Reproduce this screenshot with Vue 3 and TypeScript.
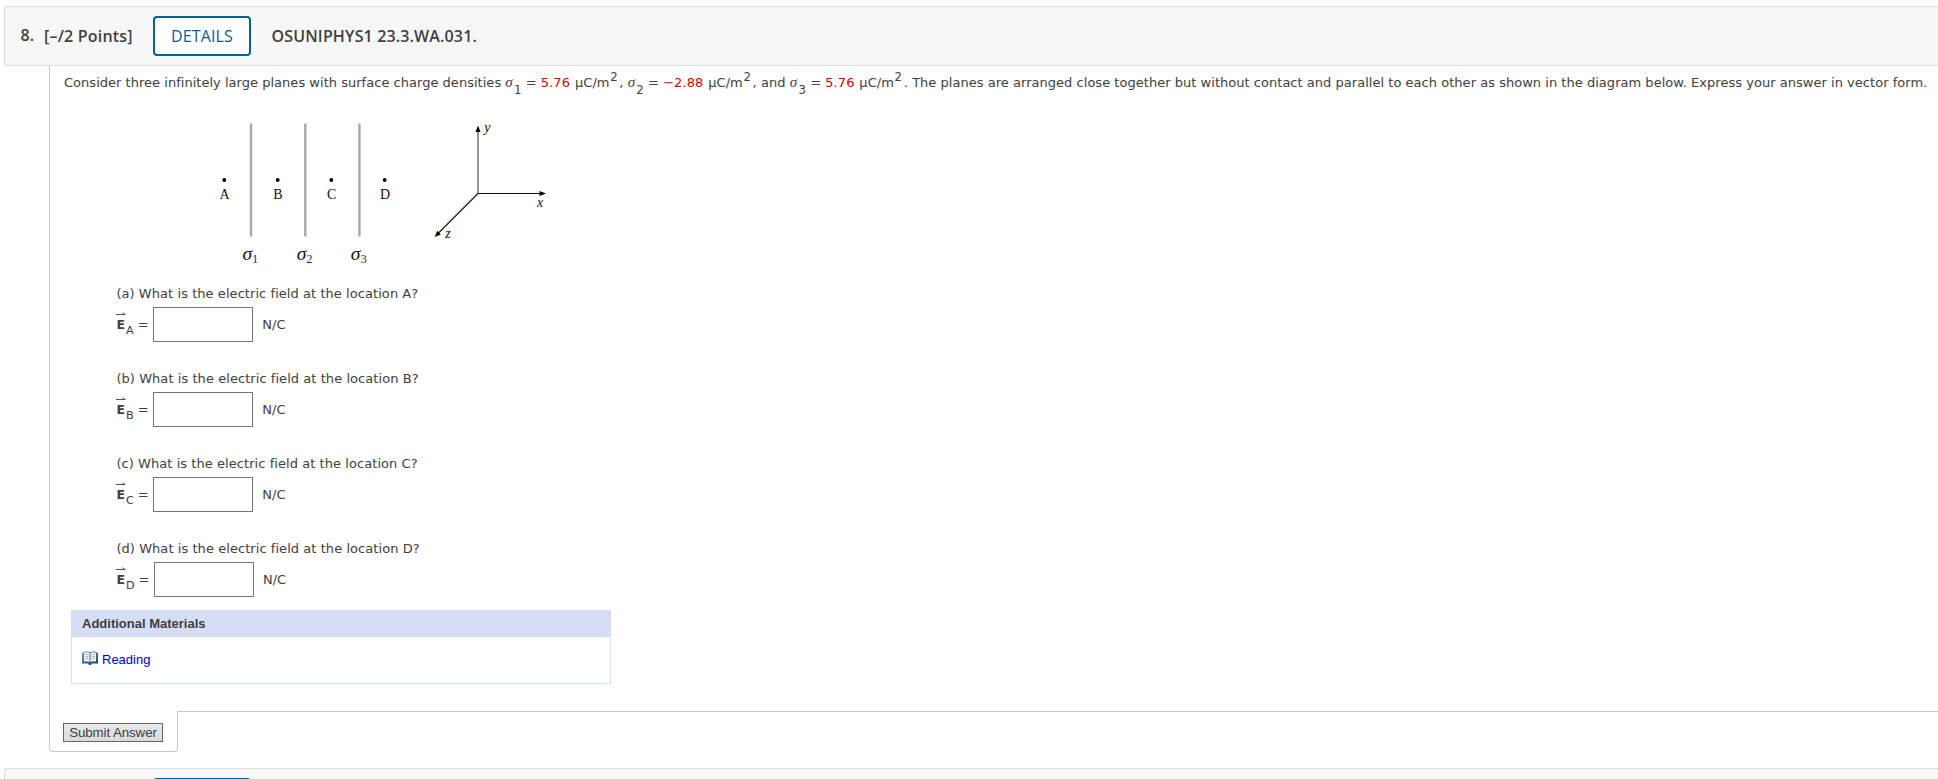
<template>
  <div class="page">
    <header class="question-header">
      <span class="number">8.</span>
      <span class="points">[–/2 Points]</span>
      <button class="details" type="button">DETAILS</button>
      <span class="code">OSUNIPHYS1 23.3.WA.031.</span>
    </header>

    <main class="question-body">
      <p class="intro">
        <span class="lead">Consider three infinitely large planes with surface charge densities </span>
        <template v-for="(plane, index) in planes" :key="plane.id">
          <span class="density"><i class="sigma">σ</i><sub>{{ plane.id }}</sub> = <span class="value">{{ plane.density }}</span> µC/m<sup>2</sup>{{ plane.after }}</span>
          <template v-if="index < planes.length - 1">{{ ' ' }}</template>
        </template>
        <span class="rest"> The planes are arranged close together but without contact and parallel to each other as shown in the diagram below. Express your answer in vector form.</span>
      </p>

      <svg class="diagram" width="380" height="160" viewBox="0 0 380 160">
        <g v-for="plane in planes" :key="plane.id">
          <line :x1="plane.x" y1="13.5" :x2="plane.x" y2="126.5" stroke="#a7a7aa" stroke-width="2.4" />
          <text :x="plane.x - 8.6" y="149.5" class="sigma-label">σ</text>
          <text :x="plane.x + 1" y="153" class="sigma-index">{{ plane.id }}</text>
        </g>
        <g v-for="point in points" :key="point.name">
          <circle :cx="point.x" cy="70" r="1.9" />
          <text :x="point.x + 0.3" y="89" text-anchor="middle" class="point-label">{{ point.name }}</text>
        </g>
        <line x1="278" y1="83.5" x2="278" y2="20" stroke="#707070" stroke-width="1.5" />
        <path d="M278 83.5H341M278 83.5L238 123.5" fill="none" stroke="#111" stroke-width="1.1" />
        <path d="M278 15.5L280.5 22H275.5ZM346 83.5L339.5 81V86ZM234.7 127L237.2 120.8L240.8 124.4Z" />
        <text x="284.3" y="22" class="axis-label">y</text>
        <text x="337" y="97.3" class="axis-label">x</text>
        <text x="245.3" y="128.3" class="axis-label">z</text>
      </svg>

      <section v-for="part in parts" :key="part.letter" class="part">
        <div class="prompt">({{ part.letter }}) What is the electric field at the location {{ part.location }}?</div>
        <div class="answer">
          <span class="vector">
            <svg class="arrow" width="10" height="5" viewBox="0 0 10 5">
              <path d="M0 2.5H9.5M6.5 0.7L9 2.5" fill="none" stroke="#555" />
            </svg>
            <b>E</b>
          </span>
          <span class="location">{{ part.location }}</span>
          <span class="equals">=</span>
          <input v-model="part.value" type="text" />
          <span class="unit">N/C</span>
        </div>
      </section>

      <section class="materials">
        <h3>Additional Materials</h3>
        <a class="reading">
          <svg width="16" height="14" viewBox="0 0 16 14">
            <defs>
              <linearGradient id="cover" x1="0" y1="0" x2="1" y2="1">
                <stop offset="0" stop-color="#5c9bc8" />
                <stop offset="1" stop-color="#153f6d" />
              </linearGradient>
            </defs>
            <path d="M0 1.5H1.5L3 .5H6L8 1.2L10 .5H13L14.5 1.5H16V12.5H10L9 14H7L6 12.5H0Z" fill="url(#cover)" />
            <path d="M2 2Q5 .5 7.7 2V11Q5 9.7 2 10.5ZM8.3 2Q11 .5 14 2V10.5Q11 9.7 8.3 11Z" fill="#f5f3f0" />
            <path d="M3.3 3.5H6.3M3.3 5.5H6.3M3.3 7.5H6.3M9.7 3.5H12.7M9.7 5.5H12.7M9.7 7.5H12.7" stroke="#aaa" stroke-width=".9" />
            <path d="M8 2V11" stroke="#777" stroke-width=".7" />
          </svg>
          <span>Reading</span>
        </a>
      </section>
    </main>

    <div class="footer">
      <div class="submit-tab">
        <button class="submit" type="button">Submit Answer</button>
      </div>
      <div class="footer-line"></div>
    </div>

    <header class="question-header next">
      <button class="details" type="button"></button>
    </header>
  </div>
</template>

<script setup lang="ts">
import { ref } from 'vue'

interface Plane {
  id: number
  density: string
  after: string
  x: number
}

interface Part {
  letter: string
  location: string
  value: string
}

const planes: Plane[] = [
  { id: 1, density: '5.76', after: ',', x: 51 },
  { id: 2, density: '−2.88', after: ', and', x: 105.3 },
  { id: 3, density: '5.76', after: '.', x: 159.4 },
]

const points = [
  { name: 'A', x: 24.3 },
  { name: 'B', x: 77.7 },
  { name: 'C', x: 131.3 },
  { name: 'D', x: 184.7 },
]

const parts = ref<Part[]>(
  ['A', 'B', 'C', 'D'].map((location) => ({
    letter: location.toLowerCase(),
    location,
    value: '',
  })),
)
</script>

<style>
body {
  margin: 0;
  background: #fff;
}
</style>

<style scoped>
.page {
  box-sizing: border-box;
  height: 779px;
  padding-top: 6px;
  overflow: hidden;
  color: #404040;
  font: 13px/18px Verdana, "DejaVu Sans", sans-serif;
}

.question-header {
  display: flex;
  box-sizing: border-box;
  height: 60px;
  margin-left: 4px;
  padding: 9px 0 0 15.5px;
  border: 1px solid #ddd;
  border-right: 0;
  border-radius: 3px 0 0 3px;
  background: #f7f7f7;
  font: 600 16px/40px "Open Sans", sans-serif;
  white-space: nowrap;
}

.number {
  width: 23.5px;
  line-height: 38px;
}

.points {
  width: 109px;
  letter-spacing: 0.2px;
}

.details {
  box-sizing: border-box;
  width: 98px;
  height: 40px;
  padding: 0;
  border: 2px solid #00629b;
  border-radius: 4px;
  background: #fff;
  color: #0b5c9c;
  font: 400 16px/36px "Open Sans", sans-serif;
  letter-spacing: 0.15px;
}

.code {
  margin-left: 20.5px;
  letter-spacing: 0.14px;
}

.question-body {
  box-sizing: border-box;
  height: 645px;
  margin-left: 49px;
  border-left: 1px solid #c8c8c8;
}

.intro {
  height: 44px;
  margin: 0;
  padding: 7px 0 0 14px;
  box-sizing: border-box;
  white-space: nowrap;
}

.lead {
  letter-spacing: 0.025px;
}

.density {
  letter-spacing: 0.06px;
}

.rest {
  letter-spacing: 0.03px;
}

.sigma {
  margin-right: 1.2px;
  font-family: "Liberation Serif", serif;
  font-size: 15px;
}

sub,
sup {
  position: relative;
  font-size: 11.7px;
  line-height: 0;
  vertical-align: baseline;
}

sub {
  top: 7px;
}

sup {
  top: -6px;
  margin: 0 1.7px 0 0.6px;
}

.value {
  margin-right: 0.7px;
  color: #d90000;
}

.diagram {
  display: block;
  margin-left: 150px;
}

.sigma-label,
.sigma-index,
.point-label,
.axis-label {
  font-family: "Liberation Serif", serif;
  fill: #111;
}

.sigma-label {
  font-size: 19.5px;
  font-style: italic;
}

.sigma-index {
  font-size: 12.5px;
  fill: #333;
}

.point-label {
  font-size: 14px;
}

.axis-label {
  font-size: 14px;
  font-style: italic;
}

.part {
  height: 85px;
  margin-left: 66px;
}

.diagram + .part {
  margin-top: 14px;
}

.prompt {
  box-sizing: border-box;
  height: 23px;
  padding: 1px 0 0 0.4px;
  letter-spacing: 0.06px;
  white-space: nowrap;
}

.answer {
  display: flex;
  height: 35px;
  line-height: 35px;
}

.vector {
  position: relative;
  width: 10px;
}

.arrow {
  position: absolute;
  top: 5px;
  left: 0;
}

.vector b {
  margin-left: 0.4px;
  font-size: 12.5px;
}

.location {
  min-width: 8px;
  padding-top: 6px;
  font-size: 11.2px;
}

.equals {
  margin-left: 3.8px;
}

.answer input {
  box-sizing: border-box;
  flex: none;
  width: 100px;
  height: 35px;
  margin: 0 9.3px 0 4.3px;
  border: 1px solid #767676;
  background: #fff;
}

.materials {
  box-sizing: border-box;
  width: 540px;
  height: 74px;
  margin: -14px 0 0 21px;
  border: 1px solid #d6ddf7;
  font: 13px/16px Arial, "Liberation Sans", sans-serif;
}

.materials h3 {
  height: 26px;
  margin: 0;
  padding-left: 10px;
  background: #d6ddf7;
  font-size: 13px;
  line-height: 26px;
}

.reading {
  display: flex;
  gap: 4px;
  padding: 14px 0 0 10px;
  color: #0000c4;
}

.reading span {
  line-height: 18px;
}

.footer {
  display: flex;
  height: 57px;
  margin-left: 49px;
}

.submit-tab {
  box-sizing: border-box;
  width: 129px;
  height: 41px;
  padding: 12px 0 0 13px;
  border: 1px solid #c8c8c8;
  border-top: 0;
  border-radius: 0 0 4px 4px;
}

.footer-line {
  flex: 1;
  border-top: 1px solid #c8c8c8;
}

.submit {
  display: block;
  box-sizing: border-box;
  width: 100px;
  height: 19px;
  padding: 0;
  border: 1px solid #666;
  background: linear-gradient(#e9e9e9, #dadada);
  color: #404040;
  font: 13.33px/17px Arial, "Liberation Sans", sans-serif;
  letter-spacing: -0.1px;
}

.next {
  padding-left: 148px;
}
</style>
